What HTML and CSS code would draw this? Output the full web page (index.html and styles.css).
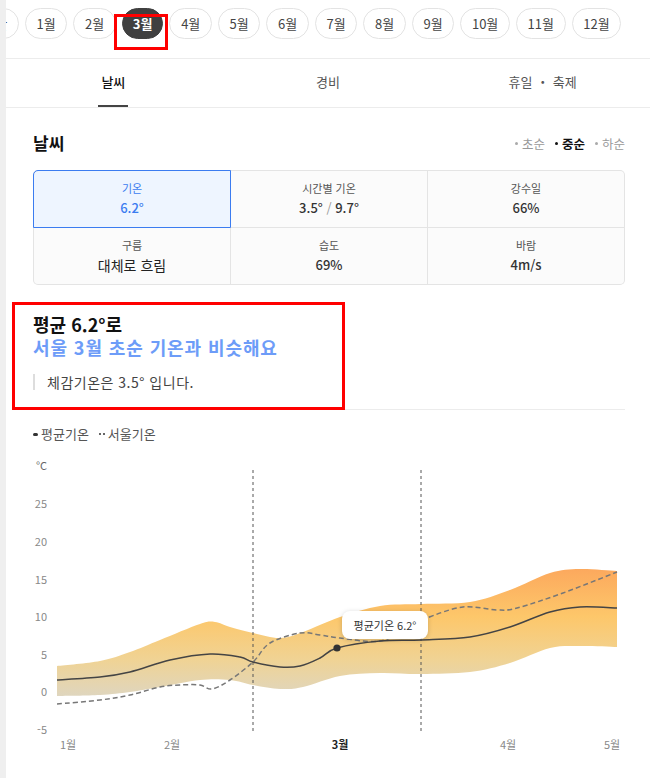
FILE: index.html
```html
<!DOCTYPE html>
<html lang="ko">
<head>
<meta charset="utf-8">
<title>서울 3월 날씨</title>
<link rel="stylesheet" href="styles.css">
</head>
<body>
<div class="app">
  <div class="rail"></div>
  <main class="main">
    <nav class="months">
      <div class="month-row">
        <span class="pill pill-year">연간</span>
        <span class="pill">1월</span>
        <span class="pill">2월</span>
        <span class="pill active">3월</span>
        <span class="pill">4월</span>
        <span class="pill">5월</span>
        <span class="pill">6월</span>
        <span class="pill">7월</span>
        <span class="pill">8월</span>
        <span class="pill">9월</span>
        <span class="pill">10월</span>
        <span class="pill">11월</span>
        <span class="pill">12월</span>
      </div>
    </nav>
    <div class="tabs">
      <div class="tab active"><span>날씨</span></div>
      <div class="tab"><span>경비</span></div>
      <div class="tab"><span>휴일 ・ 축제</span></div>
    </div>
    <section class="content">
      <div class="section-head">
        <h2>날씨</h2>
        <ul class="periods">
          <li>초순</li>
          <li class="on">중순</li>
          <li>하순</li>
        </ul>
      </div>
      <div class="stats">
        <div class="stat sel"><div class="label">기온</div><div class="value">6.2°</div></div>
        <div class="stat"><div class="label">시간별 기온</div><div class="value">3.5° <span class="slash">/</span> 9.7°</div></div>
        <div class="stat"><div class="label">강수일</div><div class="value">66%</div></div>
        <div class="stat"><div class="label">구름</div><div class="value big">대체로 흐림</div></div>
        <div class="stat"><div class="label">습도</div><div class="value">69%</div></div>
        <div class="stat"><div class="label">바람</div><div class="value">4m/s</div></div>
      </div>
      <div class="summary">
        <p class="sum-title">평균 6.2°로</p>
        <p class="sum-sub">서울 3월 초순 기온과 비슷해요</p>
        <p class="sum-quote">체감기온은 3.5° 입니다.</p>
      </div>
      <div class="legend">
        <span class="lg lg-avg">평균기온</span>
        <span class="lg lg-seoul">서울기온</span>
      </div>
      <div class="chart">
        <svg class="chart-svg" width="592" height="310" viewBox="0 0 592 310">
          <defs>
            <linearGradient id="bandGrad" gradientUnits="userSpaceOnUse" x1="0" y1="115" x2="0" y2="250">
              <stop offset="0" stop-color="#fca65c"/>
              <stop offset="0.38" stop-color="#fdc76a"/>
              <stop offset="0.7" stop-color="#f0d394"/>
              <stop offset="1" stop-color="#ddd6c3"/>
            </linearGradient>
          </defs>
          <g class="ylabels">
            <text x="14" y="20" class="unit">°C</text>
            <text x="14" y="58">25</text>
            <text x="14" y="96">20</text>
            <text x="14" y="134">15</text>
            <text x="14" y="171">10</text>
            <text x="14" y="209">5</text>
            <text x="14" y="246">0</text>
            <text x="14" y="284">-5</text>
          </g>
          <path id="band" fill="url(#bandGrad)" d=""/>
          <line class="vline" x1="220" y1="20" x2="220" y2="282"/>
          <line class="vline" x1="388" y1="20" x2="388" y2="282"/>
          <path id="seoul" class="seoul" d=""/>
          <path id="avg" class="avg" d=""/>
          <circle cx="304" cy="198" r="3.6" fill="#333"/>
          <g class="xlabels">
            <text x="35" y="299">1월</text>
            <text x="139" y="299">2월</text>
            <text x="307" y="299" class="cur">3월</text>
            <text x="475" y="299">4월</text>
            <text x="579" y="299">5월</text>
          </g>
        </svg>
        <div class="tooltip">평균기온 6.2°</div>
      </div>
    </section>
  </main>
</div>
<script src="script.js"></script>
</body>
</html>
```
FILE: styles.css
```css
* { box-sizing: border-box; }
html, body { margin: 0; padding: 0; }
body {
  font-family: "Noto Sans CJK KR", "Noto Sans", sans-serif;
  color: #222;
  background: #fff;
}
.app { display: flex; width: 650px; min-height: 778px; }
.rail { flex: none; width: 6px; background: #efefef; }
.main { flex: 1; min-width: 0; overflow: hidden; }

/* months */
.months { height: 59px; padding-top: 8px; border-bottom: 1px solid #ececec; }
.month-row { display: flex; gap: 6px; }
.pill {
  flex: none;
  position: relative;
  height: 31px;
  line-height: 29px;
  padding: 0 10.65px;
  border: 1px solid #e3e3e3;
  border-radius: 16px;
  font-size: 13px;
  color: #444;
  white-space: nowrap;
}
.pill-year { margin-left: -34.3px; }
.pill.active { padding: 0 10px; background: #404040; border-color: #404040; color: #fff; font-weight: 700; }
.pill.active::after {
  content: "";
  position: absolute;
  left: -9px; right: -6px; top: 5px; bottom: -12px;
  border: 3px solid #f00;
}

/* tabs */
.tabs { display: flex; height: 49px; border-bottom: 1px solid #ececec; }
.tab { flex: 1; display: flex; justify-content: center; }
.tab span {
  display: block;
  height: 48px;
  line-height: 46px;
  padding: 0 3px;
  font-size: 13px;
  color: #555;
  border-bottom: 2px solid transparent;
}
.tab.active span { color: #111; font-weight: 500; border-bottom-color: #444; }

/* content */
.content { padding: 23px 25px 0 27px; }
.section-head { display: flex; justify-content: space-between; align-items: center; height: 24px; }
.section-head h2 { margin: 0; font-size: 17px; line-height: 24px; font-weight: 700; color: #111; }
.periods { display: flex; gap: 10px; margin: 0; padding: 0; list-style: none; font-size: 12.5px; color: #999; }
.periods li { display: flex; align-items: center; gap: 4px; }
.periods li::before { content: ""; width: 3px; height: 3px; border-radius: 50%; background: #aaa; }
.periods li.on { color: #111; font-weight: 700; }
.periods li.on::before { background: #111; }

/* stats */
.stats {
  margin-top: 15px;
  display: grid;
  grid-template-columns: repeat(3, 1fr);
  gap: 1px;
  padding: 1px;
  background: #e4e4e4;
  border-radius: 5px;
}
.stat { position: relative; height: 56px; background: #fbfbfb; text-align: center; padding-top: 9px; }
.stat:nth-child(1) { border-top-left-radius: 4px; }
.stat:nth-child(3) { border-top-right-radius: 4px; }
.stat:nth-child(4) { border-bottom-left-radius: 4px; }
.stat:nth-child(6) { border-bottom-right-radius: 4px; }
.stat .label { font-size: 11px; line-height: 16px; color: #555; }
.stat .value { margin-top: 2px; font-size: 13px; line-height: 20px; color: #333; font-weight: 500; }
.stat .value.big { font-size: 14px; font-weight: 400; color: #222; }
.stat .slash { color: #999; font-weight: 400; }
.stat.sel { background: #eef5ff; }
.stat.sel::after {
  content: "";
  position: absolute;
  inset: -1px;
  border: 1px solid #3b7cf0;
  border-top-left-radius: 5px;
}
.stat.sel .label, .stat.sel .value { color: #3b7cf0; }

/* summary */
.summary { position: relative; margin-top: 28px; padding-bottom: 19px; border-bottom: 1px solid #ececec; }
.summary::after {
  content: "";
  position: absolute;
  left: -21px; right: 280px; top: -11px; bottom: -1px;
  border: 3px solid #f00;
}
.summary p { margin: 0; }
.sum-title { font-size: 18px; line-height: 23px; font-weight: 700; color: #111; }
.sum-sub { font-size: 18px; line-height: 23px; font-weight: 700; color: #6d9cf8; letter-spacing: 0.9px; }
.sum-quote {
  margin-top: 15px !important;
  padding-left: 12px;
  border-left: 2px solid #ddd;
  font-size: 14px;
  line-height: 16px;
  color: #444;
  letter-spacing: 0.5px;
}

/* legend */
.legend { display: flex; gap: 10px; margin-top: 16px; font-size: 13px; line-height: 16px; color: #555; }
.lg { display: flex; align-items: center; gap: 3px; }
.lg::before { content: ""; }
.lg-avg::before { width: 5px; height: 3px; border-radius: 2px; background: #333; }
.lg-seoul::before {
  width: 6px; height: 2px;
  background: linear-gradient(90deg, #666 0 2px, transparent 2px 4px, #666 4px 6px);
}

/* chart */
.chart { position: relative; margin-top: 8px; height: 310px; }
.chart-svg { display: block; overflow: visible; }
.ylabels text { font-size: 11px; fill: #888; text-anchor: end; }
.ylabels .unit { fill: #666; }
.xlabels text { font-size: 11px; fill: #888; text-anchor: middle; }
.xlabels .cur { fill: #222; font-weight: 700; }
.vline { stroke: #555; stroke-width: 1; stroke-dasharray: 3 3; }
.seoul { fill: none; stroke: #777; stroke-width: 1.5; stroke-dasharray: 5 3; }
.avg { fill: none; stroke: #444; stroke-width: 1.5; }
.tooltip {
  position: absolute;
  left: 309px; top: 161px;
  width: 86px; height: 28px;
  line-height: 28px;
  text-align: center;
  background: #fff;
  border-radius: 8px;
  box-shadow: 0 1px 5px rgba(0, 0, 0, 0.18);
  font-size: 11px;
  color: #333;
}
```
FILE: script.js
```js
(function () {
  function seg(pts, start) {
    var d = (start ? 'M' : 'L') + pts[0][0] + ',' + pts[0][1];
    for (var i = 0; i < pts.length - 1; i++) {
      var p0 = pts[i - 1] || pts[i], p1 = pts[i], p2 = pts[i + 1], p3 = pts[i + 2] || p2;
      var c1x = p1[0] + (p2[0] - p0[0]) / 6, c1y = p1[1] + (p2[1] - p0[1]) / 6;
      var c2x = p2[0] - (p3[0] - p1[0]) / 6, c2y = p2[1] - (p3[1] - p1[1]) / 6;
      d += ' C' + c1x.toFixed(1) + ',' + c1y.toFixed(1) + ' ' + c2x.toFixed(1) + ',' + c2y.toFixed(1) + ' ' + p2[0] + ',' + p2[1];
    }
    return d;
  }
  var top = [[24,216],[67,211],[97,202],[127,190],[167,174],[182,172],[197,177],[220,183],[247,188],[270,182],[307,167],[347,156],[388,154],[437,152],[477,140],[517,123],[547,119],[584,121]];
  var bottom = [[24,246],[67,245],[97,242],[127,237],[167,230],[197,230],[220,235],[247,239],[270,237],[307,226],[347,223],[388,224],[437,222],[477,213],[517,198],[547,196],[584,197]];
  var avg = [[24,230],[67,227],[97,222],[137,210],[177,204],[207,207],[220,212],[247,217],[267,216],[287,208],[304,198],[347,191],[388,190],[437,187],[477,177],[517,162],[547,157],[584,158]];
  var seoul = [[24,254],[67,250],[97,245],[127,237],[147,235],[167,235],[179,239],[197,230],[220,212],[237,193],[267,183],[287,185],[307,188],[347,191],[380,176],[394,168],[430,157],[464,160],[484,158],[530,143],[584,122]];
  document.getElementById('band').setAttribute('d', seg(top, true) + ' ' + seg(bottom.slice().reverse(), false) + ' Z');
  document.getElementById('avg').setAttribute('d', seg(avg, true));
  document.getElementById('seoul').setAttribute('d', seg(seoul, true));
})();
```
